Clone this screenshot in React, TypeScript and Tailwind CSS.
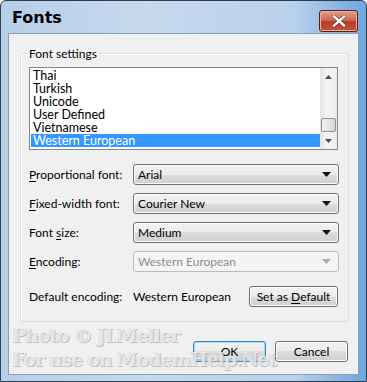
import React from "react";

const font = { fontFamily: 'Lato, "Noto Sans", sans-serif' };

function Arrow({ disabled }: { disabled?: boolean }) {
  return (
    <svg width="9" height="5" viewBox="0 0 9 5" className="shrink-0">
      <path d="M0 0 H9 L4.5 5 Z" fill={disabled ? "#a9a9a9" : "#111"} />
    </svg>
  );
}

function Combo({ value, disabled }: { value: string; disabled?: boolean }) {
  return (
    <div
      className={
        disabled
          ? "w-[206px] h-[21px] rounded-[3px] border border-[#b8bcc0] bg-[#f4f4f4] flex items-center justify-between pl-[4px] pr-[7px] text-[#8d8d8d]"
          : "w-[206px] h-[21px] rounded-[3px] border border-[#707070] bg-[linear-gradient(#f3f3f3_0%,#ebebeb_50%,#dddddd_50%,#cfcfcf_100%)] flex items-center justify-between pl-[4px] pr-[7px] text-black shadow-[inset_0_0_0_1px_#fcfcfc]"
      }
    >
      <span className="leading-none">{value}</span>
      <Arrow disabled={disabled} />
    </div>
  );
}

function Btn({ children, w, focused }: { children: React.ReactNode; w: string; focused?: boolean }) {
  return (
    <div
      className={
        (focused
          ? "border-[#3c7fb1] shadow-[inset_0_0_0_1px_#9fdcf7] "
          : "border-[#707070] shadow-[inset_0_0_0_1px_#fcfcfc] ") +
        w +
        " h-[21px] rounded-[3px] border bg-[linear-gradient(#f2f2f2_0%,#ebebeb_50%,#dddddd_50%,#cfcfcf_100%)] flex items-center justify-center text-black"
      }
    >
      {children}
    </div>
  );
}

export default function App() {
  const items = ["Thai", "Turkish", "Unicode", "User Defined", "Vietnamese", "Western European"];
  return (
    <div
      className="relative w-[367px] h-[382px] overflow-hidden rounded-t-[6px] border border-[#2f3d4c] bg-[linear-gradient(90deg,#b6cfe9_0%,#c6d9ee_40%,#b9d1ec_80%,#6ea6dc_100%)] text-[12px]"
      style={font}
    >
      {/* title bar */}
      <div className="h-[32px] flex items-start justify-between pl-[11px] pr-[8px]">
        <div
          className="mt-[8px] text-[16px] leading-[18px] text-black"
          style={{ fontFamily: '"DejaVu Sans", sans-serif', fontWeight: 600 }}
        >
          Fonts
        </div>
        <div className="mt-[9px] w-[39px] h-[22px] rounded-[3px] border border-[#5a1d18] bg-[linear-gradient(#e0a191_0%,#cf6a56_45%,#b93a24_55%,#c4553a_100%)] flex items-center justify-center shadow-[inset_0_0_0_1px_#e8b0a4]">
          <svg width="14" height="12" viewBox="0 0 14 12">
            <path d="M2 1.5 L12 10.5 M12 1.5 L2 10.5" stroke="#5a2a20" strokeWidth="3.6" strokeLinecap="square" />
            <path d="M2 1.5 L12 10.5 M12 1.5 L2 10.5" stroke="#ffffff" strokeWidth="2.4" strokeLinecap="square" />
          </svg>
        </div>
      </div>

      {/* client area */}
      <div className="mx-[7px] h-[342px] bg-[#f0f0f0] border border-[#8a9db3] flex flex-col text-black">
        <fieldset className="ml-[11px] mr-[10px] mt-[12px] border border-[#d5dde3] rounded-[3px] pl-[8px] pr-[9px] pt-[6px] pb-[14px] shadow-[inset_1px_1px_0_#ffffff]">
          <legend className="ml-[-2px] px-[2px] leading-[15px]">Font settings</legend>

          {/* listbox */}
          <div className="w-[309px] h-[83px] border border-[#828790] bg-white flex">
            <div className="flex-1 pt-[1px] pl-[1px]">
              {items.map((t, i) => (
                <div
                  key={t}
                  className={
                    "h-[13px] leading-[13px] pl-[2px] text-[12.5px] " +
                    (i === items.length - 1 ? "bg-[#3399ff] text-white" : "")
                  }
                >
                  {t}
                </div>
              ))}
            </div>
            <div className="w-[17px] bg-[linear-gradient(90deg,#e3e3e3,#f4f4f4_40%,#ececec)] flex flex-col items-center">
              <div className="h-[17px] flex items-center justify-center">
                <svg width="7" height="4" viewBox="0 0 7 4">
                  <path d="M0 4 L3.5 0 L7 4 Z" fill="#4d4d4d" />
                </svg>
              </div>
              <div className="flex-1" />
              <div className="w-[15px] h-[14px] rounded-[2px] border border-[#8e8f8f] bg-[linear-gradient(90deg,#f2f2f2,#e6e6e6_50%,#d6d6d6)]" />
              <div className="h-[17px] flex items-center justify-center">
                <svg width="7" height="4" viewBox="0 0 7 4">
                  <path d="M0 0 L7 0 L3.5 4 Z" fill="#4d4d4d" />
                </svg>
              </div>
            </div>
          </div>

          {/* combos */}
          <div className="mt-[14px] flex flex-col gap-[8px]">
            <div className="flex items-center">
              <div className="w-[104px]">
                <span className="underline underline-offset-2">P</span>roportional font:
              </div>
              <Combo value="Arial" />
            </div>
            <div className="flex items-center">
              <div className="w-[104px]">
                <span className="underline underline-offset-2">F</span>ixed-width font:
              </div>
              <Combo value="Courier New" />
            </div>
            <div className="flex items-center">
              <div className="w-[104px]">
                Font <span className="underline underline-offset-2">s</span>ize:
              </div>
              <Combo value="Medium" />
            </div>
            <div className="flex items-center">
              <div className="w-[104px]">
                <span className="underline underline-offset-2">E</span>ncoding:
              </div>
              <Combo value="Western European" disabled />
            </div>
          </div>

          {/* default encoding */}
          <div className="mt-[14px] flex items-center">
            <div className="w-[104px]">Default encoding:</div>
            <div className="w-[116px]">Western European</div>
            <Btn w="w-[89px]">
              Set as&nbsp;<span className="underline underline-offset-2">D</span>efault
            </Btn>
          </div>
        </fieldset>

        <div className="mt-[19px] mr-[10px] flex justify-end gap-[9px]">
          <Btn w="w-[73px]" focused>
            OK
          </Btn>
          <Btn w="w-[73px]">Cancel</Btn>
        </div>
      </div>

      {/* watermark */}
      <div
        className="absolute left-[11px] top-[322px] text-[19px] leading-[24px] font-bold text-white/60 [text-shadow:1px_1px_0_rgba(150,150,150,0.55),-1px_0_0_rgba(200,200,200,0.5)] pointer-events-none"
        style={{ fontFamily: '"DejaVu Serif", serif', letterSpacing: "-1.2px" }}
      >
        <div>Photo © JLMeller</div>
        <div>For use on ModemHelp.Net</div>
      </div>
    </div>
  );
}
